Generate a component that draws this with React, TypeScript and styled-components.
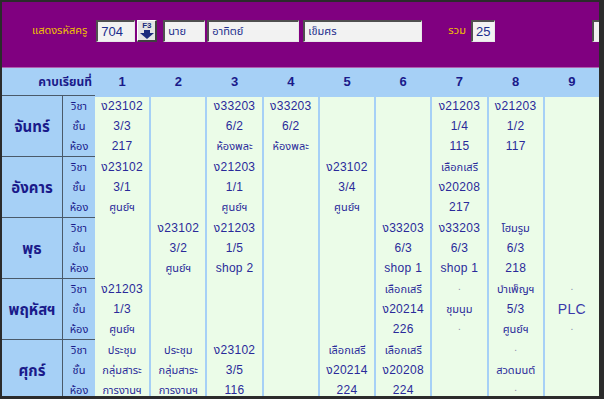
import styled, { createGlobalStyle } from "styled-components";

const GlobalStyle = createGlobalStyle`
  html, body {
    margin: 0;
    padding: 0;
    background: #ffffff;
  }
  body {
    font-family: "Liberation Sans", Tahoma, "Noto Sans Thai", sans-serif;
  }
`;

type Cell = string[] | null;

const days: { name: string; cells: Cell[] }[] = [
  {
    name: "จันทร์",
    cells: [
      ["ง23102", "3/3", "217"],
      null,
      ["ง33203", "6/2", "ห้องพละ"],
      ["ง33203", "6/2", "ห้องพละ"],
      null,
      null,
      ["ง21203", "1/4", "115"],
      ["ง21203", "1/2", "117"],
      null,
    ],
  },
  {
    name: "อังคาร",
    cells: [
      ["ง23102", "3/1", "ศูนย์ฯ"],
      null,
      ["ง21203", "1/1", "ศูนย์ฯ"],
      null,
      ["ง23102", "3/4", "ศูนย์ฯ"],
      null,
      ["เลือกเสรี", "ง20208", "217"],
      null,
      null,
    ],
  },
  {
    name: "พุธ",
    cells: [
      null,
      ["ง23102", "3/2", "ศูนย์ฯ"],
      ["ง21203", "1/5", "shop 2"],
      null,
      null,
      ["ง33203", "6/3", "shop 1"],
      ["ง33203", "6/3", "shop 1"],
      ["โฮมรูม", "6/3", "218"],
      null,
    ],
  },
  {
    name: "พฤหัสฯ",
    cells: [
      ["ง21203", "1/3", "ศูนย์ฯ"],
      null,
      null,
      null,
      null,
      ["เลือกเสรี", "ง20214", "226"],
      [".", "ชุมนุม", "."],
      ["บำเพ็ญฯ", "5/3", "ศูนย์ฯ"],
      [".", "PLC", "."],
    ],
  },
  {
    name: "ศุกร์",
    cells: [
      ["ประชุม", "กลุ่มสาระ", "การงานฯ"],
      ["ประชุม", "กลุ่มสาระ", "การงานฯ"],
      ["ง23102", "3/5", "116"],
      null,
      ["เลือกเสรี", "ง20214", "224"],
      ["เลือกเสรี", "ง20208", "224"],
      null,
      [".", "สวดมนต์", "."],
      null,
    ],
  },
];

const isThaiWord = (s: string) => /^[\u0E00-\u0E7F]+$/.test(s);

const Timetable = () => {
  return (
    <>
      <GlobalStyle />
      <Frame>
        <TopBar>
          <Caption>แสดงรหัสครู</Caption>
          <Field $w={39} $ml={9}>704</Field>
          <F3Button>
            <span>F3</span>
            <svg width="14" height="9" viewBox="0 0 14 9">
              <rect x="4" y="0" width="6" height="3" fill="#1c2c7c" />
              <polygon points="0,3 14,3 7,9" fill="#1c2c7c" />
            </svg>
          </F3Button>
          <Field $w={42} $ml={6} $small>
            นาย
          </Field>
          <Field $w={92} $ml={2} $small>
            อาทิตย์
          </Field>
          <Field $w={119} $ml={4} $small>
            เข็มศร
          </Field>
          <Caption $ml={26}>รวม</Caption>
          <Field $w={24} $ml={5}>
            25
          </Field>
          <Field $w={20} $ml={97} />
        </TopBar>

        <Grid>
          <HeaderRow>
            <HeaderTitle>คาบเรียนที่</HeaderTitle>
            {[1, 2, 3, 4, 5, 6, 7, 8, 9].map((n) => (
              <PeriodNo key={n}>{n}</PeriodNo>
            ))}
          </HeaderRow>

          {days.map((d) => (
            <DayRow key={d.name}>
              <DayName>{d.name}</DayName>
              <Labels>
                <span>วิชา</span>
                <span>ชั้น</span>
                <span>ห้อง</span>
              </Labels>
              {d.cells.map((c, i) => (
                <Slot key={i}>
                  {c &&
                    c.map((line, j) =>
                      line === "." ? (
                        <Dot key={j}>.</Dot>
                      ) : (
                        <Line key={j} $thai={isThaiWord(line)} $big={line === "PLC"}>
                          {line}
                        </Line>
                      )
                    )}
                </Slot>
              ))}
            </DayRow>
          ))}
        </Grid>
      </Frame>
    </>
  );
};

export default Timetable;

const Frame = styled.div`
  width: 604px;
  height: 399px;
  box-sizing: border-box;
  border-style: solid;
  border-color: #2b2b2b;
  border-width: 2px 5px 3px 2px;
  overflow: hidden;
  background: #a6d0f6;
`;

const TopBar = styled.div`
  height: 66px;
  box-sizing: border-box;
  background: #800080;
  border-bottom: 1px solid #b060b0;
  display: flex;
  align-items: center;
  padding: 0 0 8px 30px;
  white-space: nowrap;
`;

const Caption = styled.span<{ $ml?: number }>`
  margin-left: ${(p) => p.$ml ?? 0}px;
  color: #f2c200;
  font-size: 11px;
`;

const Field = styled.div<{ $w: number; $ml: number; $small?: boolean }>`
  width: ${(p) => p.$w}px;
  height: 22px;
  margin-left: ${(p) => p.$ml}px;
  flex-shrink: 0;
  box-sizing: border-box;
  background: #f2f2f2;
  border-style: solid;
  border-width: 2px 1px 1px 2px;
  border-color: #505050 #e8e8e8 #e8e8e8 #505050;
  color: #1c2c8c;
  font-size: ${(p) => (p.$small ? "11px" : "13px")};
  line-height: 19px;
  padding-left: 3px;
`;

const F3Button = styled.div`
  width: 20px;
  height: 22px;
  margin-left: 2px;
  flex-shrink: 0;
  box-sizing: border-box;
  background: #e4e4e4;
  border-style: solid;
  border-width: 1px 2px 2px 1px;
  border-color: #ffffff #404040 #404040 #ffffff;
  display: flex;
  flex-direction: column;
  align-items: center;
  padding-top: 1px;

  span {
    font-size: 8px;
    line-height: 8px;
    font-weight: 700;
    color: #1c2c7c;
  }
`;

const Grid = styled.div`
  display: flex;
  flex-direction: column;
  gap: 2px;
`;

const HeaderRow = styled.div`
  height: 27px;
  display: grid;
  grid-template-columns: 61px 28px repeat(9, 1fr);
  column-gap: 2px;
  align-items: center;
  color: #1a1a8a;
  font-weight: 700;
`;

const HeaderTitle = styled.div`
  grid-column: 1 / span 2;
  text-align: right;
  padding-right: 1px;
  font-size: 12px;
`;

const PeriodNo = styled.div`
  text-align: center;
  font-size: 13px;
`;

const DayRow = styled.div`
  height: 59px;
  display: grid;
  grid-template-columns: 61px 28px repeat(9, 1fr);
  column-gap: 2px;
`;

const DayName = styled.div`
  border-top: 1px solid #4a5a6a;
  border-right: 1px solid #4a5a6a;
  margin-top: -2px;
  display: flex;
  align-items: center;
  justify-content: center;
  color: #1a1a8a;
  font-size: 15px;
  font-weight: 700;
`;

const Labels = styled.div`
  border-top: 1px solid #4a5a6a;
  margin: -2px -2px 0 -2px;
  padding-top: 2px;
  display: flex;
  flex-direction: column;
  align-items: center;
  color: #1a1a8a;
  font-size: 11px;

  span {
    height: 20px;
    line-height: 17px;
  }
`;

const Slot = styled.div`
  background: #ebfce8;
  display: flex;
  flex-direction: column;
  align-items: center;
  color: #2a2a9a;
`;

const Line = styled.div<{ $thai: boolean; $big: boolean }>`
  height: 20px;
  line-height: 19px;
  font-size: ${(p) => (p.$big ? "14px" : p.$thai ? "11px" : "12px")};
  color: ${(p) => (p.$big ? "#3a3aaa" : "#2a2a9a")};
  letter-spacing: ${(p) => (p.$thai ? "0" : "0.3px")};
`;

const Dot = styled.div`
  height: 20px;
  line-height: 14px;
  font-size: 10px;
  color: #8a8aa8;
`;
